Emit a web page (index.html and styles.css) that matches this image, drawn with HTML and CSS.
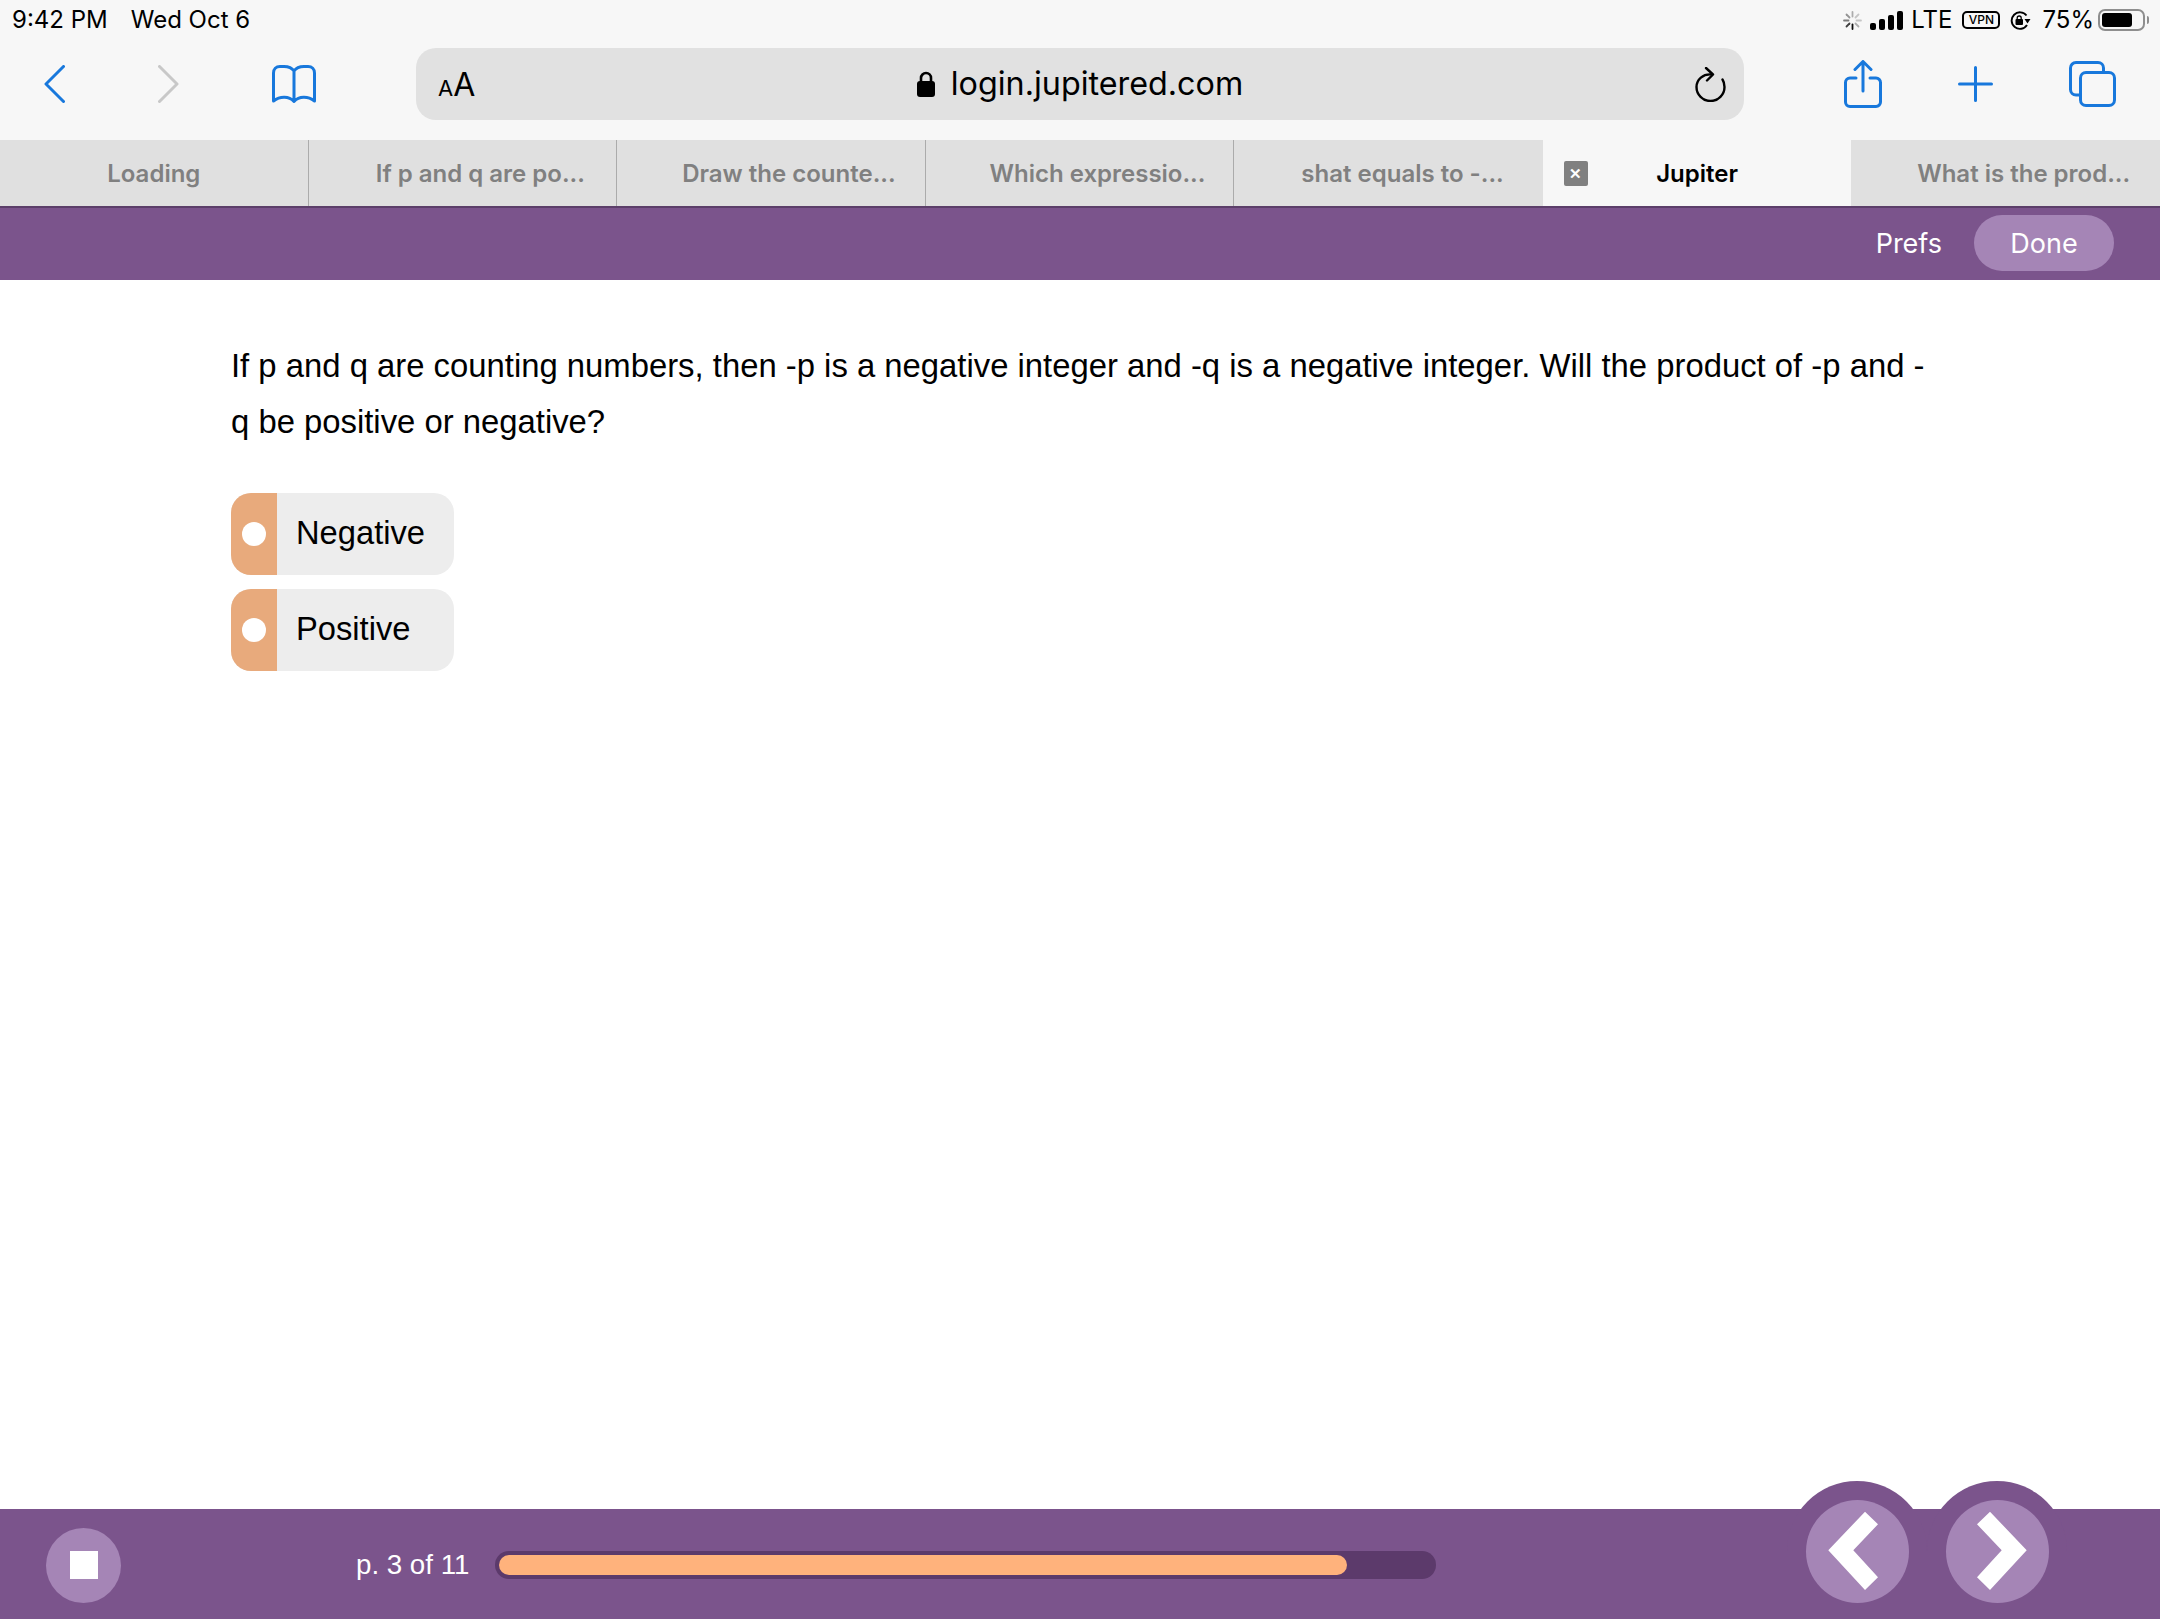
FILE: index.html
```html
<!DOCTYPE html>
<html lang="en">
<head>
<meta charset="utf-8">
<title>Jupiter</title>
<link rel="stylesheet" href="styles.css">
</head>
<body>
<div class="page">
  <header class="chrome">
    <div class="status">
      <div class="status-left"><span>9:42 PM</span><span>Wed Oct 6</span></div>
      <div class="status-right">
        <svg class="spinner" width="19" height="19" viewBox="0 0 19 19" fill="none" stroke="#000" stroke-width="1.8" stroke-linecap="round">
          <path d="M9.5 1v4.5" opacity=".3"/><path d="M15.5 3.5l-3 3" opacity=".2"/><path d="M18 9.5h-4.5" opacity=".2"/><path d="M15.5 15.5l-3-3" opacity=".3"/><path d="M9.5 18v-4.5" opacity=".95"/><path d="M3.5 15.5l3-3" opacity=".75"/><path d="M1 9.5h4.5" opacity=".5"/><path d="M3.5 3.5l3 3" opacity=".4"/>
        </svg>
        <svg class="signal" width="33" height="19" viewBox="0 0 33 19" fill="#000">
          <rect x="0" y="12" width="6" height="7" rx="2"/><rect x="9" y="8" width="6" height="11" rx="2"/><rect x="18" y="4" width="6" height="15" rx="2"/><rect x="27" y="0" width="6" height="19" rx="2"/>
        </svg>
        <span class="lte">LTE</span>
        <span class="vpn">VPN</span>
        <svg class="rotlock" width="21" height="19" viewBox="0 0 21 19" fill="none" stroke="#000">
          <path d="M16.500 4.500A8.300 8.300 0 1 0 17 14" stroke-width="1.900"/>
          <path d="M14.500 8h6l-3 4.500z" fill="#000" stroke="none"/>
          <rect x="5.500" y="8" width="7.500" height="6" rx="1" fill="#000" stroke="none"/>
          <path d="M7.200 8.500V7a2 2 0 0 1 4 0v1.500" stroke-width="1.300"/>
        </svg>
        <span class="pct">75%</span>
        <span class="battery"><span class="battery-fill"></span></span>
        <span class="battery-nub"></span>
      </div>
    </div>
    <div class="toolbar">
      <svg class="icon-back" width="21" height="38" viewBox="0 0 21 38" fill="none" stroke="#1878dc" stroke-width="3" stroke-linecap="round" stroke-linejoin="round"><path d="M19.500 1.500L2 19l17.500 17.500"/></svg>
      <svg class="icon-forward" width="21" height="38" viewBox="0 0 21 38" fill="none" stroke="#c8c8c8" stroke-width="3" stroke-linecap="round" stroke-linejoin="round"><path d="M1.500 1.500L19 19 1.500 36.500"/></svg>
      <svg class="icon-book" width="44" height="38" viewBox="0 0 44 38" fill="none" stroke="#1878dc" stroke-width="3" stroke-linejoin="round"><path d="M22 6C20 3 17 1.500 12 1.500H8C4 1.500 1.500 4 1.500 8V36C8 31 17 31 22 36.500C27 31 36 31 42.500 36V8C42.500 4 40 1.500 36 1.500H32C27 1.500 24 3 22 6ZM22 6V36"/></svg>
      <div class="urlbar">
        <span class="aa"><span class="aa-small">A</span><span class="aa-big">A</span></span>
        <span class="url">
          <svg class="lock" width="18" height="26" viewBox="0 0 18 26"><path d="M4 12V7a5 5 0 0 1 10 0v5" fill="none" stroke="#000" stroke-width="2.600"/><rect x="0" y="10" width="18" height="16" rx="3" fill="#000"/></svg>
          <span>login.jupitered.com</span>
        </span>
        <svg class="reload" width="31" height="35" viewBox="0 0 31 35" fill="none" stroke="#000" stroke-width="2.400" stroke-linecap="round" stroke-linejoin="round"><path d="M17 7.500C8 6.500 1.500 12.500 1.500 20a14 14 0 0 0 28 0c0-3-.7-5.500-2-7.500"/><path d="M11 1l7 6.500-6 6"/></svg>
      </div>
      <svg class="icon-share" width="38" height="48" viewBox="0 0 38 48" fill="none" stroke="#1878dc" stroke-width="3" stroke-linecap="round" stroke-linejoin="round"><path d="M12 18H6a4.500 4.500 0 0 0-4.500 4.500V42A4.500 4.500 0 0 0 6 46.500H32a4.500 4.500 0 0 0 4.500-4.500V22.500A4.500 4.500 0 0 0 32 18H26"/><path d="M19 31V2M11 9.500L19 1.500l8 8"/></svg>
      <svg class="icon-plus" width="35" height="36" viewBox="0 0 35 36" fill="none" stroke="#1878dc" stroke-width="3" stroke-linecap="round"><path d="M17.500 1.500V34.500M1.500 18H33.500"/></svg>
      <svg class="icon-tabs" width="47" height="46" viewBox="0 0 47 46" fill="none" stroke="#1878dc" stroke-width="3" stroke-linejoin="round"><path d="M11 34H7a5.500 5.500 0 0 1-5.500-5.500V7A5.500 5.500 0 0 1 7 1.500H29A5.500 5.500 0 0 1 34.500 7V11"/><rect x="11.500" y="11.500" width="34" height="33" rx="5.500"/></svg>
    </div>
    <nav class="tabs">
      <div class="tab">Loading</div>
      <div class="tab tab-long">If p and q are po...</div>
      <div class="tab tab-long">Draw the counte...</div>
      <div class="tab tab-long">Which expressio...</div>
      <div class="tab tab-long tab-before-active">shat equals to -...</div>
      <div class="tab tab-active">
        <span class="tab-close">✕</span>
        <span>Jupiter</span>
      </div>
      <div class="tab tab-long">What is the prod...</div>
    </nav>
  </header>

  <div class="topbar">
    <span class="prefs">Prefs</span>
    <span class="done">Done</span>
  </div>

  <main class="content">
    <p class="question">If p and q are counting numbers, then -p is a negative integer and -q is a negative integer. Will the product of -p and -<wbr>q be positive or negative?</p>
    <div class="options">
      <div class="option"><span class="option-tab"><span class="option-dot"></span></span><span class="option-label">Negative</span></div>
      <div class="option"><span class="option-tab"><span class="option-dot"></span></span><span class="option-label">Positive</span></div>
    </div>
  </main>

  <footer class="footer">
    <div class="stop"><span class="stop-square"></span></div>
    <span class="page-count">p. 3 of 11</span>
    <div class="progress"><div class="progress-fill" style="width:90.9%"></div></div>
    <div class="pager">
      <div class="pager-btn"><span class="pager-disc">
        <svg width="103" height="103" viewBox="0 0 103 103" fill="#fff"><path d="M22.300 50.300L59 11.700 72 24.300 47.300 50.300 72 77.300 59 90Z"/></svg>
      </span></div>
      <div class="pager-btn"><span class="pager-disc">
        <svg width="103" height="103" viewBox="0 0 103 103" fill="#fff"><path d="M80.700 50.300L44 11.700 31 24.300 55.700 50.300 31 77.300 44 90Z"/></svg>
      </span></div>
    </div>
  </footer>
</div>
</body>
</html>
```

FILE: styles.css
```css
* { box-sizing: border-box; }
html, body { margin: 0; padding: 0; background: #fff; }
.page {
  width: 2160px;
  height: 1620px;
  display: flex;
  flex-direction: column;
  overflow: hidden;
  padding-bottom: 1px;
  font-family: "Liberation Sans", Arial, sans-serif;
  color: #000;
}
.chrome {
  background: #f7f7f7;
  font-family: Inter, "Noto Sans", sans-serif;
}
.status {
  height: 48px;
  display: flex;
  justify-content: space-between;
  align-items: flex-start;
  padding: 8px 11px 0 12px;
  font-size: 24px;
  line-height: 24px;
}
.status-left { display: flex; gap: 23px; }
.status-right { display: flex; align-items: center; height: 24px; }
.signal { margin-left: 8px; }
.lte { margin-left: 8px; }
.vpn {
  margin-left: 10px;
  width: 38px;
  height: 18px;
  border: 2px solid #000;
  border-radius: 5px;
  font-size: 12px;
  line-height: 14px;
  text-align: center;
  font-weight: 500;
}
.rotlock { margin-left: 10px; }
.pct { margin-left: 11px; }
.battery {
  margin-left: 4px;
  width: 47px;
  height: 22px;
  border: 2px solid #8e8e8e;
  border-radius: 7px;
  padding: 2px;
  display: block;
}
.battery-fill {
  display: block;
  width: 30px;
  height: 14px;
  background: #000;
  border-radius: 3px;
}
.battery-nub {
  width: 2px;
  height: 8px;
  margin-left: 2px;
  background: #8e8e8e;
  border-radius: 0 2px 2px 0;
}
.toolbar {
  height: 92px;
  display: flex;
  align-items: center;
  padding: 0 44px 20px;
}
.icon-forward, .icon-book { margin-left: 93px; }
.urlbar {
  flex: 1;
  margin: 0 100px;
  height: 72px;
  background: #e1e1e1;
  border-radius: 20px;
  display: grid;
  grid-template-columns: 1fr auto 1fr;
  align-items: center;
  padding: 0 18px 0 22px;
}
.aa { justify-self: start; display: flex; align-items: baseline; line-height: 1; padding-top: 2px; }
.aa-small { font-size: 22px; }
.aa-big { font-size: 32px; }
.url {
  display: flex;
  align-items: center;
  gap: 16px;
  font-size: 32.3px;
  line-height: 40px;
  margin-right: 4px;
}
.reload { justify-self: end; }
.icon-plus, .icon-tabs { margin-left: 76px; }
.tabs { display: flex; height: 66px; }
.tab {
  flex: 0 0 calc(100% / 7);
  min-width: 0;
  display: flex;
  align-items: center;
  justify-content: center;
  background: #e0e0e0;
  color: #808080;
  font-size: 24px;
  font-weight: 600;
  white-space: nowrap;
  border-right: 1px solid #ababab;
  position: relative;
}
.tab-long { padding-left: 36px; }
.tab-before-active { border-right: 0; padding-left: 28px; }
.tab-long:last-child { border-right: 0; }
.tab-active {
  background: #f7f7f7;
  color: #000;
  border-right: 0;
}
.tab-close {
  position: absolute;
  left: 21px;
  top: 21px;
  width: 24px;
  height: 25px;
  background: #808080;
  color: #fff;
  border-radius: 2px;
  font-size: 15px;
  line-height: 25px;
  text-align: center;
  font-weight: 700;
}
.topbar {
  height: 74px;
  background: #7b548c;
  border-top: 2px solid #5c3f6a;
  display: flex;
  align-items: center;
  justify-content: flex-end;
  padding: 0 46px 2px 0;
  color: #fff;
  font-family: Inter, "Noto Sans", sans-serif;
  font-size: 27px;
}
.done {
  margin-left: 32px;
  width: 140px;
  height: 56px;
  border-radius: 28px;
  background: #a585b6;
  display: flex;
  align-items: center;
  justify-content: center;
}
.content {
  flex: 1;
  padding: 58px 231px 0;
}
.question {
  margin: 0 0 43px;
  font-size: 32.85px;
  line-height: 56px;
}
.options { display: flex; flex-direction: column; gap: 14px; }
.option {
  width: 223px;
  height: 82px;
  display: flex;
  align-items: center;
  background: #ededed;
  border-radius: 20px;
  overflow: hidden;
}
.option-tab {
  width: 46px;
  height: 100%;
  background: #e8aa7c;
  display: flex;
  align-items: center;
  justify-content: center;
}
.option-dot {
  width: 24px;
  height: 24px;
  border-radius: 50%;
  background: #fff;
}
.option-label { margin-left: 19px; margin-bottom: 2px; font-size: 32.7px; }
.footer {
  height: 110px;
  flex: none;
  background: #7b548c;
  display: flex;
  align-items: center;
  padding: 0 93px 0 46px;
  color: #fff;
}
.stop {
  width: 75px;
  height: 75px;
  margin-top: 2px;
  border-radius: 50%;
  background: #a585b6;
  display: flex;
  align-items: center;
  justify-content: center;
}
.stop-square { width: 28px; height: 28px; background: #fff; }
.page-count {
  margin: 2px 28px 0 235px;
  width: 111px;
  font-size: 27.7px;
  white-space: nowrap;
}
.progress {
  width: 941px;
  height: 28px;
  margin-top: 2px;
  padding: 4px;
  background: #5c3a6b;
  border-radius: 14px;
}
.progress-fill {
  height: 100%;
  background: #ffb27c;
  border-radius: 10px;
}
.pager {
  margin-left: auto;
  align-self: flex-start;
  margin-top: -28px;
  display: flex;
}
.pager-btn {
  width: 140px;
  height: 130px;
  border-radius: 70px 70px 0 0;
  background: #7b548c;
  padding: 19px 18px 0 19px;
}
.pager-disc {
  display: block;
  width: 103px;
  height: 103px;
  border-radius: 50%;
  background: #a585b6;
}
.pager-disc svg { display: block; }
```
